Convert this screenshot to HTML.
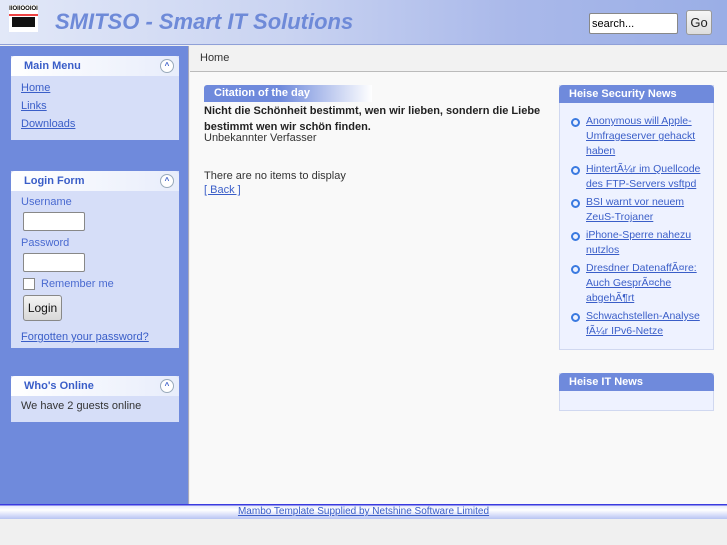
<!DOCTYPE html>
<html><head><meta charset="utf-8"><style>
*{margin:0;padding:0;box-sizing:border-box}
body{width:727px;height:545px;background:#f0f0f0;font-family:"Liberation Sans",sans-serif;font-size:11px;position:relative;overflow:hidden;color:#333}
.abs{position:absolute}
#hdr{left:0;top:0;width:727px;height:45px;background:linear-gradient(90deg,#e2e8f8 0%,#c9d3f1 40%,#aab9ea 70%,#9aaee6 100%);border-bottom:1px solid #8fa0d8}
#title{left:55px;top:9px;font-size:22px;font-style:italic;font-weight:bold;color:#6e8ad8}
#left{left:0;top:46px;width:189px;height:458px;background:#6f8adc;border-right:1px solid #aab}
#main{left:190px;top:46px;width:537px;height:458px;background:#f9f9f9}
#crumb{left:190px;top:46px;width:537px;height:26px;background:#f2f2f2;border-bottom:1px solid #bbb;padding:6px 10px;color:#333}
.box{position:absolute;left:11px;width:168px;background:#d6def8}
.bh{height:20px;background:linear-gradient(90deg,#fff,#e8edfb);border-radius:4px 4px 0 0;padding:4px 13px;font-weight:bold;color:#3a5ec8;position:relative}
.tg{position:absolute;right:5px;top:3px;width:14px;height:14px;border-radius:50%;background:#fff;border:1px solid #9ab;color:#3a5ec8;font-size:8px;line-height:12px;text-align:center}
.bb{padding:4px 10px;color:#4a6ad0}
a{color:#3a5ec8;text-decoration:underline}
.bb a{display:block;margin-bottom:6px}
input.t{width:62px;height:19px;border:1px solid #888;border-radius:2px;background:#fff;margin:4px 0 6px 2px;display:block}
.rh{position:absolute;left:559px;width:155px;background:#eef2ff;border:1px solid #d0d8f0}
.rh .h{height:18px;background:#6f8adc;color:#fff;font-weight:bold;padding:3px 10px;border-radius:4px 4px 0 0;margin:-1px}
.rh li{list-style:none;position:relative;padding-left:26px;margin-bottom:3px;line-height:15px;font-size:10.5px}
.rh li:before{content:"";position:absolute;left:11px;top:4px;width:5px;height:5px;border:2px solid #3a7ae0;border-radius:50%}
#foot{left:0;top:504px;width:727px;height:15px;background:linear-gradient(#3a3ae0 0,#3a3ae0 1px,#e8ecfb 2px,#fff 6px,#d8defa 11px,#b8c4f2 15px);text-align:center;font-size:10px;padding-top:2px}
</style></head><body>
<div id="hdr" class="abs"></div>
<div class="abs" style="left:9px;top:5px;width:29px;height:27px;background:#fff;font-size:6px;font-weight:bold;line-height:8px;text-align:center;color:#000">IIOIIOOIOI<div style="height:2px;background:#e44;margin:1px 0"></div><div style="background:#111;height:10px;margin:0 3px"></div></div>
<div id="title" class="abs">SMITSO - Smart IT Solutions</div>
<input class="abs" style="left:589px;top:13px;width:89px;height:21px;border:1px solid #888;border-radius:2px;padding-left:2px;font-size:11px;font-family:'Liberation Sans'" value="search...">
<div class="abs" style="left:686px;top:10px;width:26px;height:25px;border:1px solid #999;border-radius:3px;background:linear-gradient(#f6f6f6,#ddd);font-size:13px;text-align:center;line-height:23px;color:#222">Go</div>
<div id="left" class="abs"></div>
<div id="main" class="abs"></div>
<div id="crumb" class="abs">Home</div>

<div class="box" style="top:56px;height:84px"><div class="bh">Main Menu<span class="tg">^</span></div>
<div class="bb" style="padding-top:6px"><a>Home</a><a>Links</a><a>Downloads</a></div></div>

<div class="box" style="top:171px;height:177px"><div class="bh">Login Form<span class="tg">^</span></div>
<div class="bb" style="padding-top:5px">Username<input class="t">Password<input class="t">
<div style="margin:3px 0 5px 2px"><span style="display:inline-block;width:12px;height:12px;border:1px solid #888;background:#fff;vertical-align:middle;margin-right:6px"></span>Remember me</div>
<div style="width:39px;height:26px;border:1px solid #888;border-radius:3px;background:linear-gradient(#f4f4f4,#d8d8d8);color:#111;font-size:12px;text-align:center;line-height:24px;margin:0 0 10px 2px">Login</div>
<a>Forgotten your password?</a></div></div>

<div class="box" style="top:376px;height:46px"><div class="bh">Who's Online<span class="tg">^</span></div>
<div class="bb" style="color:#333">We have 2 guests online</div></div>

<div class="abs" style="left:204px;top:85px;width:168px;height:17px;background:linear-gradient(90deg,#6f8adc 0,#6f8adc 45%,#fff 100%);border-radius:3px 0 0 0;color:#fff;font-weight:bold;padding:2px 10px">Citation of the day</div>
<div class="abs" style="left:204px;top:103px;width:340px;font-weight:bold;line-height:16px;color:#222">Nicht die Schönheit bestimmt, wen wir lieben, sondern die Liebe bestimmt wen wir schön finden.</div>
<div class="abs" style="left:204px;top:132px">Unbekannter Verfasser</div>
<div class="abs" style="left:204px;top:170px">There are no items to display</div>
<div class="abs" style="left:204px;top:184px"><a>[ Back ]</a></div>

<div class="rh" style="top:85px;height:265px"><div class="h">Heise Security News</div>
<ul style="padding-top:12px">
<li><a>Anonymous will Apple-Umfrageserver gehackt haben</a></li>
<li><a>HintertÃ¼r im Quellcode des FTP-Servers vsftpd</a></li>
<li><a>BSI warnt vor neuem ZeuS-Trojaner</a></li>
<li><a>iPhone-Sperre nahezu nutzlos</a></li>
<li><a>Dresdner DatenaffÃ¤re: Auch GesprÃ¤che abgehÃ¶rt</a></li>
<li><a>Schwachstellen-Analyse fÃ¼r IPv6-Netze</a></li></ul></div>
<div class="rh" style="top:373px;height:38px"><div class="h">Heise IT News</div></div>

<div id="foot" class="abs"><a>Mambo Template Supplied by Netshine Software Limited</a></div>
</body></html>
